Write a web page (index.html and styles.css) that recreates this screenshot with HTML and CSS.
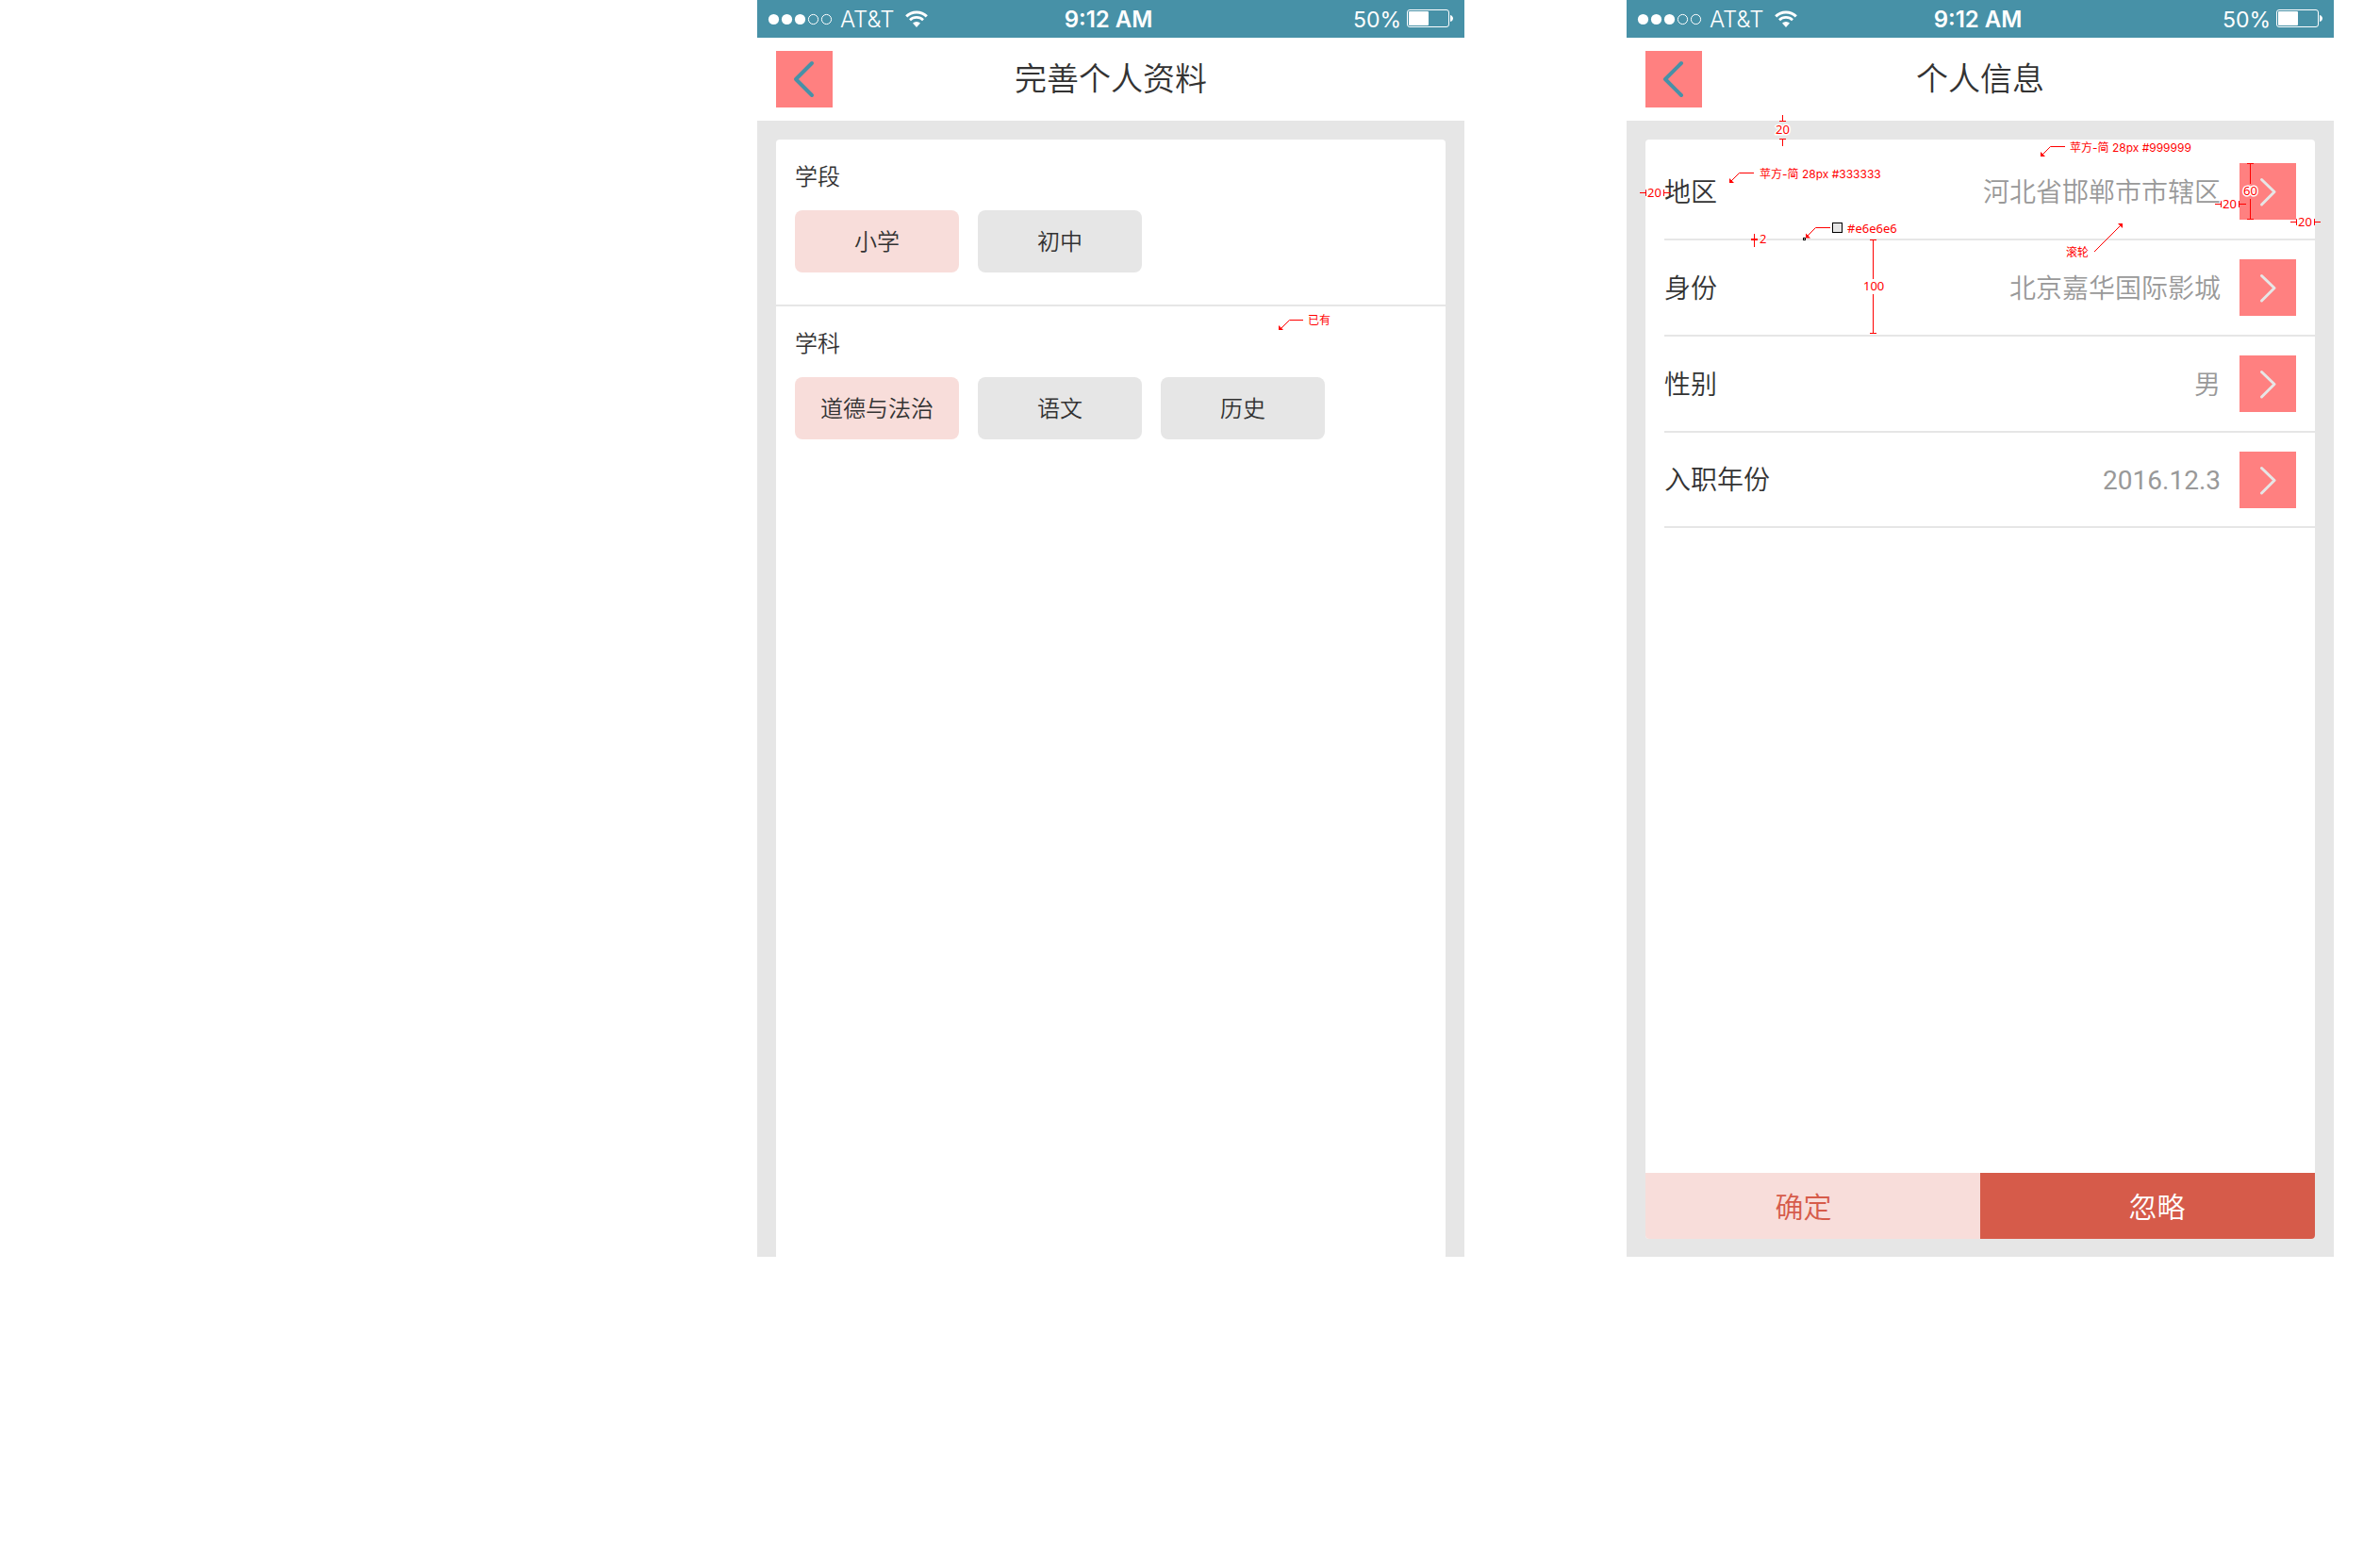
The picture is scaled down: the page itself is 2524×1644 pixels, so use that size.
FILE: index.html
```html
<!DOCTYPE html>
<html lang="zh-CN">
<head>
<meta charset="utf-8">
<meta name="viewport" content="width=device-width, initial-scale=1">
<title>个人信息</title>
<link rel="stylesheet" href="styles.css">
</head>
<body>
<svg width="0" height="0" class="sprite" aria-hidden="true">
  <symbol id="signal" viewBox="0 0 70 14">
    <circle cx="7.5" cy="7.5" r="5.6" fill="#fff"/><circle cx="21.5" cy="7.5" r="5.6" fill="#fff"/><circle cx="35.5" cy="7.5" r="5.6" fill="#fff"/>
    <circle cx="49.5" cy="7.5" r="5.1" fill="none" stroke="#fff"/><circle cx="63.5" cy="7.5" r="5.1" fill="none" stroke="#fff"/>
  </symbol>
  <symbol id="wifi" viewBox="0 0 24 18">
    <path d="M1.2 6.4a15.4 15.4 0 0 1 21.6 0" fill="none" stroke="#fff" stroke-width="3"/>
    <path d="M5 10.3a10 10 0 0 1 14 0" fill="none" stroke="#fff" stroke-width="2.7"/>
    <path d="M8 13.6a5.8 5.8 0 0 1 8 0L12 18z" fill="#fff"/>
  </symbol>
  <symbol id="battery" viewBox="0 0 50 20">
    <rect x=".5" y=".5" width="44" height="18" rx="2.5" fill="none" stroke="#fff"/>
    <rect x="2" y="2" width="21" height="15" rx="1" fill="#fff"/>
    <path d="M46 6c4 1 4 6 0 7z" fill="#fff"/>
  </symbol>
  <symbol id="back" viewBox="0 0 60 60"><path d="M38 13L21 30l17 17" fill="none" stroke="#4791a7" stroke-width="4" stroke-linecap="round" stroke-linejoin="round"/></symbol>
  <symbol id="next" viewBox="0 0 60 60"><path d="M23.5 17.5L37 30.500l-13.500 13.500" fill="none" stroke="#e6e6e6" stroke-width="3" stroke-linecap="round" stroke-linejoin="round"/></symbol>
</svg>

<main class="board">
  <section class="phone">
    <div class="status">
      <div class="carrier"><svg class="signal"><use href="#signal"/></svg><span>AT&amp;T</span><svg class="wifi"><use href="#wifi"/></svg></div>
      <time class="clock">9:12 AM</time>
      <div class="power"><span>50%</span><svg class="battery"><use href="#battery"/></svg></div>
    </div>
    <header class="bar">
      <button class="hotspot" type="button" aria-label="返回"><svg><use href="#back"/></svg></button>
      <h1>完善个人资料</h1>
    </header>
    <div class="screen screen-open">
      <div class="card card-open">
        <section class="group">
          <h2>学段</h2>
          <div class="tags">
            <button type="button" class="tag tag-on" aria-pressed="true">小学</button>
            <button type="button" class="tag" aria-pressed="false">初中</button>
          </div>
        </section>
        <section class="group">
          <h2>学科</h2>
          <div class="tags">
            <button type="button" class="tag tag-on" aria-pressed="true">道德与法治</button>
            <button type="button" class="tag" aria-pressed="false">语文</button>
            <button type="button" class="tag" aria-pressed="false">历史</button>
          </div>
        </section>
      </div>
    </div>
    <svg class="notes notes-right" viewBox="0 0 375 400">
      <path class="line" d="M204 339.500H189.500L180 349"/><path class="head" d="M178 345v5h5z"/>
      <text x="209" y="344">已有</text>
    </svg>
  </section>

  <section class="phone">
    <div class="status">
      <div class="carrier"><svg class="signal"><use href="#signal"/></svg><span>AT&amp;T</span><svg class="wifi"><use href="#wifi"/></svg></div>
      <time class="clock">9:12 AM</time>
      <div class="power"><span>50%</span><svg class="battery"><use href="#battery"/></svg></div>
    </div>
    <header class="bar">
      <button class="hotspot" type="button" aria-label="返回"><svg><use href="#back"/></svg></button>
      <h1>个人信息</h1>
    </header>
    <div class="screen">
      <div class="card">
        <dl class="rows">
          <div class="row"><dt>地区</dt><dd class="value">河北省邯郸市市辖区</dd><dd><button class="hotspot" type="button" aria-label="选择地区"><svg><use href="#next"/></svg></button></dd></div>
          <div class="row"><dt>身份</dt><dd class="value">北京嘉华国际影城</dd><dd><button class="hotspot" type="button" aria-label="选择身份"><svg><use href="#next"/></svg></button></dd></div>
          <div class="row"><dt>性别</dt><dd class="value">男</dd><dd><button class="hotspot" type="button" aria-label="选择性别"><svg><use href="#next"/></svg></button></dd></div>
          <div class="row"><dt>入职年份</dt><dd class="value date">2016.12.3</dd><dd><button class="hotspot" type="button" aria-label="选择入职年份"><svg><use href="#next"/></svg></button></dd></div>
        </dl>
        <div class="actions">
          <button type="button" class="confirm">确定</button>
          <button type="button" class="skip">忽略</button>
        </div>
      </div>
    </div>
    <svg class="notes notes-left" viewBox="0 0 375 400">
      <path class="line crisp" d="M165.500 122v6M162 128.500h7M162 147.500h7M165.500 148v7"/>
      <text class="size" x="158" y="142">20</text>
      <path class="line" d="M135 183.500h-15.500L111 192"/><path class="head" d="M109 189v5h5z"/>
      <text x="141" y="189">苹方-简 28px #333333</text>
      <path class="line crisp" d="M14 204.500h6M20.500 201v7M39.500 201v7M40 204.500h7"/>
      <text class="size" x="22" y="209">20</text>
      <path class="line crisp" d="M135.500 248v14"/><path class="head" d="M132 253h7v2h-7z"/>
      <text class="size" x="141" y="258">2</text>
      <path class="line" d="M216 241.500h-15.500L192 250"/><path class="head" d="M190 247.500v5h5z"/>
      <rect x="187.500" y="252.500" width="2" height="2" fill="#fff" stroke="#000"/>
      <rect x="218.500" y="236.500" width="10" height="10" fill="#e6e6e6" stroke="#000"/>
      <text class="size" x="234" y="247">#e6e6e6</text>
      <path class="line crisp" d="M258 254.500h7M261.500 254v42M261.500 312v42M258 353.500h7"/>
      <text class="size" x="251" y="308">100</text>
    </svg>
    <svg class="notes notes-right" viewBox="0 0 375 400">
      <path class="line" d="M90 155.500H74.500L66 164"/><path class="head" d="M64 161v5h5z"/>
      <text x="95" y="161">苹方-简 28px #999999</text>
      <path class="line" d="M121 267l28-28"/><path class="head" d="M146 237h5v5z"/>
      <text x="91" y="272">滚轮</text>
      <path class="line crisp" d="M249 216.500h6M255.500 213v7M274.500 213v7M275 216.500h7"/>
      <text class="size" x="257" y="221">20</text>
      <path class="line crisp" d="M283 173.500h7M286.500 173v22M286.500 211v22M283 232.500h7"/>
      <text class="size" x="279" y="207">60</text>
      <path class="line crisp" d="M329 235.500h6M335.500 232v7M354.500 232v7M355 235.500h6"/>
      <text class="size" x="337" y="240">20</text>
    </svg>
  </section>
</main>
</body>
</html>
```
FILE: styles.css
```css
* { box-sizing: border-box; }

body {
  margin: 0;
  background: #fff;
  color: #333;
  font-family: Roboto, "Noto Sans CJK SC", sans-serif;
  font-weight: 350;
}

h1, h2, dl, dt, dd { margin: 0; font-weight: inherit; }

button {
  border: 0;
  padding: 0;
  color: inherit;
  font: inherit;
  cursor: pointer;
}

svg { display: block; }
.sprite { position: absolute; }

.board {
  display: grid;
  grid-template-columns: 1fr 1fr;
  align-items: start;
  gap: 172px;
  padding: 0 49px 0 803px;
}

.phone {
  position: relative;
  display: flex;
  flex-direction: column;
  aspect-ratio: 750 / 1333;
}

.status {
  display: grid;
  grid-template-columns: 1fr auto 1fr;
  align-items: center;
  height: 40px;
  padding: 0 11px 0 10px;
  background: #4791a7;
  color: #fff;
  font-family: Inter, sans-serif;
  font-size: 24px;
  line-height: 36px;
}

.carrier, .power { display: flex; align-items: center; }
.carrier { gap: 8px; font-weight: 300; }
.carrier .wifi { margin-left: 4px; }
.power { justify-content: flex-end; gap: 6px; font-size: 23px; font-weight: 400; }
.clock { padding-right: 4px; font-weight: 600; }
.clock, .status span { padding-top: 2px; }
.signal { width: 70px; height: 14px; }
.wifi { width: 24px; height: 18px; }
.battery { width: 50px; height: 20px; }

.bar {
  display: grid;
  grid-template-columns: 60px 1fr 60px;
  align-items: center;
  height: 88px;
  padding: 0 20px;
}

.bar h1 {
  font-size: 34px;
  line-height: 48px;
  text-align: center;
}

.hotspot {
  display: block;
  width: 60px;
  height: 60px;
  background: #ff8080;
}
.hotspot svg { width: 60px; height: 60px; }

.screen {
  display: flex;
  flex: 1;
  padding: 20px 20px 19px;
  background: #e6e6e6;
}
.screen-open { padding-bottom: 0; }

.card {
  display: flex;
  flex: 1;
  flex-direction: column;
  overflow: hidden;
  border-radius: 4px;
  background: #fff;
}
.card-open { border-radius: 4px 4px 0 0; }

.group { padding: 22px 20px 34px; }
.group + .group { border-top: 2px solid #e6e6e6; }
.group h2 {
  margin-bottom: 17px;
  font-size: 24px;
  line-height: 36px;
}

.tags { display: flex; flex-wrap: wrap; gap: 20px; }
.tag {
  width: 174px;
  height: 66px;
  padding-bottom: 3px;
  border-radius: 8px;
  background: #e6e6e6;
  font-size: 24px;
}
.tag-on { background: #f8ddda; }

.rows { padding: 5px 0 0 20px; }
.row {
  display: grid;
  grid-template-columns: auto 1fr auto;
  align-items: center;
  gap: 20px;
  min-height: 102px;
  padding-right: 20px;
  border-bottom: 2px solid #e6e6e6;
  font-size: 28px;
  line-height: 40px;
}
.row:last-child { min-height: 101px; }
.row dt, .value { padding-top: 3px; }
.value { color: #999; text-align: right; }
.date { font-weight: 400; }

.actions {
  display: grid;
  grid-template-columns: 1fr 1fr;
  height: 70px;
  margin-top: auto;
  font-size: 30px;
}
.actions button { padding-bottom: 3px; }
.confirm { padding-right: 20px; background: #f8ddda; color: #d65b4a; }
.skip { padding-left: 20px; background: #d65b4a; color: #fff; }

.notes {
  position: absolute;
  top: 0;
  width: 375px;
  height: 400px;
  pointer-events: none;
  fill: #f00;
  font-family: Inter, "Noto Sans CJK SC", sans-serif;
  font-size: 12px;
  font-weight: 400;
}
.notes-left { left: 0; }
.notes-right { right: 0; }
.line { fill: none; stroke: #f00; }
.crisp { shape-rendering: crispEdges; }
.head { fill: #f00; }
.size {
  font-family: "Noto Sans", sans-serif;
  font-size: 13px;
  stroke: #fff;
  stroke-width: 3px;
  paint-order: stroke;
}
```
